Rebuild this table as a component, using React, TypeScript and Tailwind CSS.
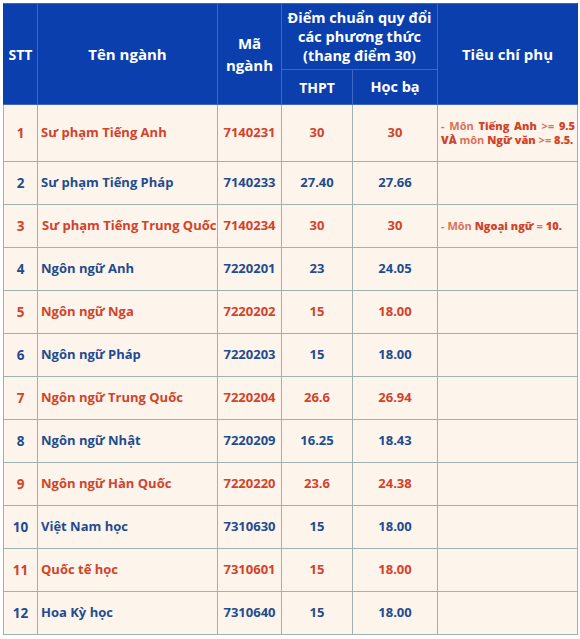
import React from 'react';

const rows = [
  { stt: '1', name: 'Sư phạm Tiếng Anh', code: '7140231', thpt: '30', hb: '30', red: true, note: 'anh' },
  { stt: '2', name: 'Sư phạm Tiếng Pháp', code: '7140233', thpt: '27.40', hb: '27.66', red: false },
  { stt: '3', name: 'Sư phạm Tiếng Trung Quốc', code: '7140234', thpt: '30', hb: '30', red: true, note: 'ngoai' },
  { stt: '4', name: 'Ngôn ngữ Anh', code: '7220201', thpt: '23', hb: '24.05', red: false },
  { stt: '5', name: 'Ngôn ngữ Nga', code: '7220202', thpt: '15', hb: '18.00', red: true },
  { stt: '6', name: 'Ngôn ngữ Pháp', code: '7220203', thpt: '15', hb: '18.00', red: false },
  { stt: '7', name: 'Ngôn ngữ Trung Quốc', code: '7220204', thpt: '26.6', hb: '26.94', red: true },
  { stt: '8', name: 'Ngôn ngữ Nhật', code: '7220209', thpt: '16.25', hb: '18.43', red: false },
  { stt: '9', name: 'Ngôn ngữ Hàn Quốc', code: '7220220', thpt: '23.6', hb: '24.38', red: true },
  { stt: '10', name: 'Việt Nam học', code: '7310630', thpt: '15', hb: '18.00', red: false },
  { stt: '11', name: 'Quốc tế học', code: '7310601', thpt: '15', hb: '18.00', red: true },
  { stt: '12', name: 'Hoa Kỳ học', code: '7310640', thpt: '15', hb: '18.00', red: false },
];

const hd = 'border border-[#3f66c4] bg-[#0b3fae] text-white font-bold text-center align-middle';
const td = 'border border-[#9db3b0] align-middle';

function Note({ kind }: { kind?: string }) {
  if (kind === 'anh') {
    return (
      <div className="text-[11px] leading-[14px] text-[#d9715a]">
        <div className="[text-align-last:justify] text-justify">
          - Môn <b className="text-[#d1432a]">Tiếng Anh</b> &gt;= <b className="text-[#d1432a]">9.5</b>
        </div>
        <div>
          <b className="text-[#d1432a]">VÀ</b> môn <b className="text-[#d1432a]">Ngữ văn</b> &gt;= <b className="text-[#d1432a]">8.5.</b>
        </div>
      </div>
    );
  }
  if (kind === 'ngoai') {
    return (
      <div className="text-[11px] leading-[14px] text-[#d9715a]">
        - Môn <b className="text-[#d1432a]">Ngoại ngữ</b> = <b className="text-[#d1432a]">10.</b>
      </div>
    );
  }
  return null;
}

export default function App() {
  return (
    <div className="w-[580px] h-[639px] bg-white pt-[3px] pl-[3px]" style={{ fontFamily: '"Open Sans", "Noto Sans", sans-serif' }}>
      <table className="border-collapse table-fixed w-[574px] border border-[#8a9fa0]">
        <colgroup>
          <col className="w-[34px]" />
          <col className="w-[180px]" />
          <col className="w-[64px]" />
          <col className="w-[71px]" />
          <col className="w-[85px]" />
          <col className="w-[140px]" />
        </colgroup>
        <thead>
          <tr className="h-[66px]">
            <th rowSpan={2} className={`${hd} border-l-[#0b3fae] text-[14px]`}>STT</th>
            <th rowSpan={2} className={`${hd} text-[15px]`}>Tên ngành</th>
            <th rowSpan={2} className={`${hd} text-[15px] leading-[22px]`}>Mã<br />ngành</th>
            <th colSpan={2} className={`${hd} text-[14.5px] leading-[19px]`}>
              Điểm chuẩn quy đổi<br />các phương thức<br />(thang điểm 30)
            </th>
            <th rowSpan={2} className={`${hd} border-r-[#0b3fae] text-[15px]`}>Tiêu chí phụ</th>
          </tr>
          <tr className="h-[35px]">
            <th className={`${hd} text-[14px]`}>THPT</th>
            <th className={`${hd} text-[14.5px]`}>Học bạ</th>
          </tr>
        </thead>
        <tbody className="bg-[#fdf4ec] text-[13px] font-bold">
          {rows.map((r) => {
            const c = r.red ? 'text-[#d1432a]' : 'text-[#1f4c8f]';
            return (
              <tr key={r.stt} className={r.stt === '1' ? 'h-[57px]' : 'h-[43px]'}>
                <td className={`${td} ${c} text-center text-[13.5px]`}>{r.stt}</td>
                <td className={`${td} ${c} ${r.stt === '3' ? 'pl-[4px]' : 'pl-[3px]'} whitespace-nowrap`}>{r.name}</td>
                <td className={`${td} ${c} text-center`}>{r.code}</td>
                <td className={`${td} ${c} text-center`}>{r.thpt}</td>
                <td className={`${td} ${c} text-center`}>{r.hb}</td>
                <td className={`${td} pl-[3px] pr-[2px]`}>
                  <Note kind={r.note} />
                </td>
              </tr>
            );
          })}
        </tbody>
      </table>
    </div>
  );
}
